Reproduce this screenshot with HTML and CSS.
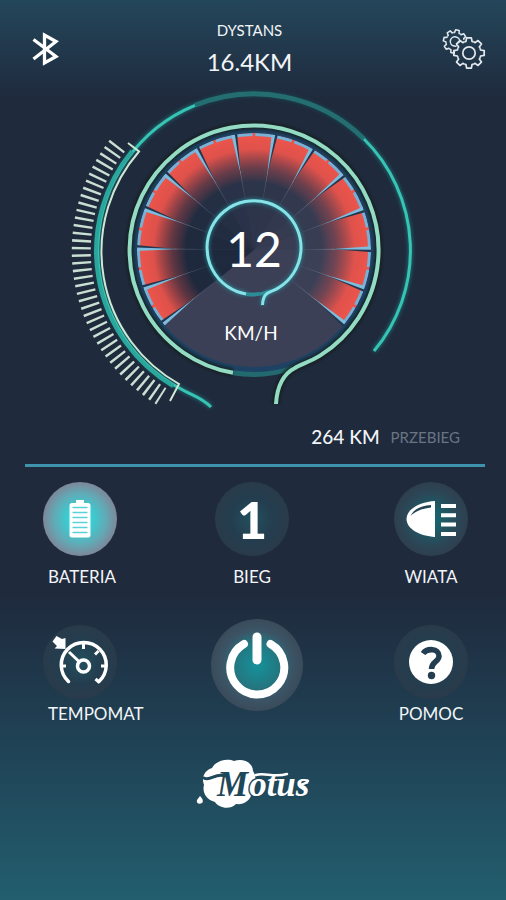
FILE: index.html
```html
<!DOCTYPE html>
<html lang="pl">
<head>
<meta charset="utf-8">
<meta name="viewport" content="width=device-width, initial-scale=1">
<title>Motus</title>
<link rel="stylesheet" href="styles.css">
</head>
<body>
<main class="app">
  <header class="top">
    <button class="icon-btn bluetooth" type="button" aria-label="Bluetooth">
      <svg width="26" height="34" viewBox="0 0 26 34" aria-hidden="true">
        <path d="M1.500 7.500 24 24.500 12.500 31V3L24 9.500 1.500 27" fill="none" stroke="#fff" stroke-width="3.300"/>
      </svg>
    </button>
    <div class="trip">
      <span class="trip-label">DYSTANS</span>
      <span class="trip-value">16.4KM</span>
    </div>
    <button class="icon-btn settings" type="button" aria-label="Ustawienia">
      <svg width="43" height="41" viewBox="0 0 43 41" aria-hidden="true">
        <defs>
          <path id="tooth" d="M-4.600-11.100A12 12 0 0 1-3-11.600L-2.400-15.200H2.400L3-11.600A12 12 0 0 1 4.600-11.100"/>
          <g id="gear">
            <use href="#tooth"/>
            <use href="#tooth" transform="rotate(45)"/>
            <use href="#tooth" transform="rotate(90)"/>
            <use href="#tooth" transform="rotate(135)"/>
            <use href="#tooth" transform="rotate(180)"/>
            <use href="#tooth" transform="rotate(225)"/>
            <use href="#tooth" transform="rotate(270)"/>
            <use href="#tooth" transform="rotate(315)"/>
            <circle r="6.200"/>
          </g>
          <mask id="behind">
            <rect width="43" height="41" fill="#fff"/>
            <circle cx="27" cy="24" r="14" fill="#000"/>
          </mask>
        </defs>
        <g fill="none" stroke="#e3e9ee" stroke-linejoin="round">
          <g mask="url(#behind)"><use href="#gear" stroke-width="2" transform="translate(13 12.500) rotate(12) scale(.76)"/></g>
          <use href="#gear" stroke-width="1.700" transform="translate(27 24)"/>
        </g>
      </svg>
    </button>
  </header>

  <svg class="gauge" viewBox="60 84 387 330" role="img" aria-label="12 KM/H">
    <defs>
      <radialGradient id="heat" gradientUnits="userSpaceOnUse" cx="254" cy="250" r="117">
        <stop offset=".58" stop-color="#e8514a" stop-opacity="0"/>
        <stop offset=".7" stop-color="#d84d4a" stop-opacity=".35"/>
        <stop offset=".86" stop-color="#e8534b" stop-opacity=".95"/>
        <stop offset="1" stop-color="#ee554b"/>
      </radialGradient>
      <linearGradient id="faint" gradientUnits="userSpaceOnUse" x1="-80" y1="0" x2="-48" y2="0">
        <stop offset="0" stop-color="#8fa4b8" stop-opacity=".6"/>
        <stop offset="1" stop-color="#8fa4b8" stop-opacity=".08"/>
      </linearGradient>
      <path id="slice" d="M0 0-117 0A117 117 0 0 1-110-39.700Z"/>
      <g id="spoke">
        <path d="M-118-3.500-78 0-118 1Z" fill="#22364e"/>
        <path d="M-117-1-76 0-117 2.500Z" fill="#7dbcdc"/>
        <path d="M-80-.300H-48V.300H-80Z" fill="url(#faint)"/>
      </g>
    </defs>

    <g class="outer">
      <path class="dim" d="M195 105.300A157 157 0 0 1 364 139"/>
      <path class="lit" d="M195 105.300A157 157 0 0 0 181 389C191 395 201 397 211 407"/>
      <path class="lit-wide" d="M132 151A157 157 0 0 0 173 386"/>
      <path class="lit" d="M364 139A157 157 0 0 1 374 351"/>
      <path class="bracket" d="M128 143 139 151.500A152 152 0 0 0 179 384L170 401"/>
      <path class="ticks" pathLength="284.500" d="M117.400 145.600A172 172 0 0 0 161.300 396.400"/>
    </g>

    <circle cx="254" cy="250" r="118" fill="#3b4057"/>
    <g transform="translate(254 250) rotate(-39)" fill="#1e293d">
      <use href="#slice"/>
      <use href="#slice" transform="rotate(19.850)"/>
      <use href="#slice" transform="rotate(39.700)" opacity=".95"/>
      <use href="#slice" transform="rotate(59.550)" opacity=".85"/>
      <use href="#slice" transform="rotate(79.400)" opacity=".75"/>
      <use href="#slice" transform="rotate(99.250)" opacity=".6"/>
      <use href="#slice" transform="rotate(119.100)" opacity=".5"/>
      <use href="#slice" transform="rotate(138.950)" opacity=".4"/>
      <use href="#slice" transform="rotate(158.800)" opacity=".3"/>
      <use href="#slice" transform="rotate(178.650)" opacity=".2"/>
      <use href="#slice" transform="rotate(198.500)" opacity=".1"/>
    </g>
    <path d="M254 250 163.100 323.600A117 117 0 1 1 344.900 323.600Z" fill="url(#heat)"/>
    <path class="rim" pathLength="258" d="M164.200 322.700A115.500 115.500 0 1 1 343.800 322.700"/>
    <g transform="translate(254 250) rotate(-39)">
      <use href="#spoke"/>
      <use href="#spoke" transform="rotate(19.850)"/>
      <use href="#spoke" transform="rotate(39.700)"/>
      <use href="#spoke" transform="rotate(59.550)"/>
      <use href="#spoke" transform="rotate(79.400)"/>
      <use href="#spoke" transform="rotate(99.250)"/>
      <use href="#spoke" transform="rotate(119.100)"/>
      <use href="#spoke" transform="rotate(138.950)"/>
      <use href="#spoke" transform="rotate(158.800)"/>
      <use href="#spoke" transform="rotate(178.650)"/>
      <use href="#spoke" transform="rotate(198.500)"/>
      <use href="#spoke" transform="rotate(218.350)"/>
      <use href="#spoke" transform="rotate(238.200)"/>
      <use href="#spoke" transform="rotate(258)"/>
    </g>

    <circle class="groove" cx="254" cy="250" r="120"/>
    <path class="ring-dim" d="M233 372.700A124.500 124.500 0 0 0 293 368"/>
    <path class="ring-shadow" d="M233 372.700A124.500 124.500 0 1 1 320 355.600C308 363 301 364 295 368 283 374 277 387 276 404"/>
    <path class="ring" d="M233 372.700A124.500 124.500 0 1 1 320 355.600C308 363 301 364 295 368 283 374 277 387 276 404"/>

    <path class="hub-dim" d="M246 294A47 47 0 0 0 271 291"/>
    <path class="hub" d="M246 294A47 47 0 1 1 279 287.500C272 293 263 290 262.500 305"/>

    <text class="speed" x="254" y="267">12</text>
    <text class="unit" x="251" y="340">KM/H</text>
  </svg>

  <p class="mileage"><strong>264 KM</strong><span>PRZEBIEG</span></p>

  <section class="panel">
    <button class="tile tile-left" type="button">
      <span class="disc disc-on">
        <svg width="22" height="40" viewBox="0 0 22 40" aria-hidden="true">
          <path d="M7 1H15V4H19A2.500 2.500 0 0 1 21.500 6.500V36A2.500 2.500 0 0 1 19 38.500H3A2.500 2.500 0 0 1 .5 36V6.500A2.500 2.500 0 0 1 3 4H7Z" fill="#fff"/>
          <path d="M3.500 8.500H18.500M3.500 13.500H18.500M3.500 18.500H18.500M3.500 23.500H18.500M3.500 28.500H18.500M3.500 33.500H18.500" stroke="#58d3d8" stroke-width="1.500"/>
        </svg>
      </span>
      <span class="name">BATERIA</span>
    </button>

    <button class="tile tile-mid" type="button">
      <span class="disc"><b class="gear-no">1</b></span>
      <span class="name">BIEG</span>
    </button>

    <button class="tile tile-right" type="button">
      <span class="disc disc-glow">
        <svg width="50" height="38" viewBox="0 0 50 38" aria-hidden="true">
          <path d="M29 1V37C14 36 .5 29 .5 19S14 2 29 1Z" fill="#fff"/>
          <path d="M4.500 16C8 8.500 16 5.500 25 5V7.500C17 8.500 10 10.500 4.500 16Z" fill="#204655"/>
          <path d="M35 6H50M35 15.300H50M35 24.600H50M35 34H50" stroke="#fff" stroke-width="4"/>
        </svg>
      </span>
      <span class="name">WIATA</span>
    </button>

    <button class="tile tile-left tile-low" type="button">
      <span class="disc">
        <svg width="56" height="50" viewBox="0 0 56 50" aria-hidden="true">
          <g fill="none" stroke="#fff" stroke-width="3">
            <path d="M16.500 44.500A22.500 22.500 0 1 1 47 44.500" stroke-width="3.500" stroke-linecap="round"/>
            <circle cx="31.500" cy="29" r="6" stroke-width="3.500"/>
            <path d="M17 15 27.500 25M31.500 7V12M9 29H14M49 29H54M46.500 14 43 17.500M43.500 42 47.500 45.500"/>
          </g>
          <path d="M4.500-1 10 2 13.500 1V12L2.500 11.500 5 9 .5 4.500Z" fill="#fff"/>
        </svg>
      </span>
      <span class="name">TEMPOMAT</span>
    </button>

    <button class="power" type="button" aria-label="Zasilanie">
      <svg width="64" height="66" viewBox="0 0 64 66" aria-hidden="true">
        <g fill="none" stroke="#fff" stroke-linecap="round">
          <path d="M19 12A27 27 0 1 0 45.500 12" stroke-width="8"/>
          <path d="M32 5V28" stroke-width="9"/>
        </g>
      </svg>
    </button>

    <button class="tile tile-right tile-low" type="button">
      <span class="disc">
        <svg width="44" height="44" viewBox="0 0 44 44" aria-hidden="true">
          <circle cx="22" cy="22" r="22" fill="#fff"/>
          <path d="M14 13.500C18 8 30 8 30 16 30 22 22.500 21.500 22.500 29" fill="none" stroke="#223e50" stroke-width="5.500"/>
          <circle cx="22.500" cy="35.500" r="3.700" fill="#223e50"/>
        </svg>
      </span>
      <span class="name">POMOC</span>
    </button>
  </section>

  <footer class="brand">
    <svg width="114" height="52" viewBox="0 0 114 52" role="img" aria-label="Motus">
      <path d="M16 10C20 2 32 0 38 3 48 0 57 5 57 13 62 20 58 28 56 34 55 43 47 47 40 46 33 53 22 49 19 44 10 42 6 34 8 27 5 19 9 12 16 10Z" fill="#fff"/>
      <path d="M4 38C6 40 8 43 6 45 3 47 0 45 1 42Z" fill="#fff"/>
      <path d="M8 20C14 24 20 14 29 18" fill="none" stroke="#1f475a" stroke-width="3" stroke-linecap="round"/>
      <text class="logo" x="21" y="38"><tspan class="logo-m">M</tspan><tspan class="logo-rest" dx="1">otus</tspan></text>
      <path d="M60 17C68 14 78 20 91 16M105 27C108 25 110 26 112 23" fill="none" stroke="#fff" stroke-width="2.500" stroke-linecap="round"/>
    </svg>
  </footer>
</main>
</body>
</html>
```
FILE: styles.css
```css
* {
  box-sizing: border-box;
}

body {
  margin: 0;
  font-family: Lato, "Liberation Sans", sans-serif;
  color: #f2f5f8;
}

button {
  margin: 0;
  padding: 0;
  border: 0;
  background: none;
  color: inherit;
  font: inherit;
  cursor: pointer;
}

svg {
  display: block;
  overflow: visible;
}

.app {
  min-height: 100vh;
  background: linear-gradient(#24465a 0, #1f2a3d 11%, #1f2a3d 66%, #204457 84%, #225e6e 100%);
}

.top {
  display: grid;
  grid-template-columns: 1fr auto 1fr;
  align-items: center;
  padding: 20px 21px 0 14px;
}

.bluetooth {
  justify-self: start;
  margin-left: 18px;
}

.settings {
  justify-self: end;
}

.trip {
  display: flex;
  flex-direction: column;
  align-items: center;
  gap: 6px;
}

.trip-label {
  font-size: 15px;
  line-height: 20px;
}

.trip-value {
  font-size: 24px;
  line-height: 32px;
}

.gauge {
  width: 100%;
  max-width: 387px;
  margin: 6px auto 0;
}

.outer path {
  fill: none;
}

.outer .dim {
  stroke: #246d70;
  stroke-width: 5;
  filter: drop-shadow(0 0 2px #174a50);
}

.outer .lit {
  stroke: #37c4b4;
  stroke-width: 3;
  filter: drop-shadow(0 0 2px #1d8c86);
}

.outer .lit-wide {
  stroke: #2aa79c;
  stroke-width: 4;
}

.outer .bracket {
  stroke: #cfe8d4;
  stroke-width: 2;
}

.outer .ticks {
  stroke: #c9dfd2;
  stroke-width: 19;
  stroke-dasharray: 2.400 4.844;
}

.rim {
  fill: none;
  stroke: #76b2d8;
  stroke-width: 3;
  stroke-dasharray: 8.600 1.323;
  stroke-dashoffset: -.6;
}

.groove {
  fill: none;
  stroke: #1d4263;
  stroke-width: 6;
}

.ring,
.ring-shadow,
.ring-dim {
  fill: none;
}

.ring-shadow {
  stroke: #16201f;
  stroke-width: 9;
  opacity: .7;
  filter: blur(1px);
}

.ring {
  stroke: #93dcc3;
  stroke-width: 4;
}

.ring-dim {
  stroke: #236a70;
  stroke-width: 5;
}

.hub,
.hub-dim {
  fill: none;
}

.hub {
  stroke: #86e4e8;
  stroke-width: 3;
  filter: drop-shadow(0 0 2px #2a9aa5);
}

.hub-dim {
  stroke: #2c8d96;
  stroke-width: 4;
}

.speed,
.unit {
  fill: #fff;
  text-anchor: middle;
}

.speed {
  font-size: 48px;
}

.unit {
  font-size: 19px;
}

.mileage {
  display: flex;
  justify-content: flex-end;
  align-items: center;
  gap: 11px;
  margin: 0 21px 0 25px;
  padding: 9px 25px 13px 0;
  border-bottom: 3px solid #3f93ad;
  line-height: 28px;
}

.mileage strong {
  font-size: 19px;
  font-weight: 500;
}

.mileage span {
  font-size: 15px;
  color: #6a7583;
}

.panel {
  display: grid;
  grid-template-columns: 1fr 92px 1fr;
  align-items: start;
  row-gap: 31px;
  padding: 15px 35px 0 43px;
}

.tile {
  display: flex;
  flex-direction: column;
  align-items: center;
  gap: 10px;
}

.tile-left {
  justify-self: start;
  align-items: flex-start;
}

.tile-left .name {
  padding-left: 5px;
}

.tile-mid {
  width: 82px;
}

.tile-right {
  justify-self: end;
  width: 80px;
}

.tile-low {
  gap: 4px;
  padding-top: 6px;
}

.disc {
  display: flex;
  justify-content: center;
  align-items: center;
  width: 74px;
  height: 74px;
  border-radius: 50%;
  background: radial-gradient(circle closest-side, #22505f, #243d4e 60%, #293b4b);
}

.disc-on {
  background: radial-gradient(circle closest-side, #35d0d6 30%, #62aab5 70%, #7d879a 100%);
}

.disc-glow {
  background: radial-gradient(circle closest-side, #17626c 20%, #2c4656 75%, #2e3f4f);
}

.gear-no {
  font-size: 52px;
  line-height: 60px;
  font-weight: 900;
  color: #fff;
}

.name {
  font-size: 17px;
  line-height: 22px;
}

.power {
  display: flex;
  justify-content: center;
  align-items: center;
  width: 92px;
  height: 92px;
  border-radius: 50%;
  background: radial-gradient(circle closest-side, #14929a, #247680 50%, #3b5566 75%, #3a4b5b);
}

.brand {
  display: flex;
  justify-content: center;
  padding: 33px 0 40px;
}

.logo {
  font-family: "Liberation Serif", serif;
  font-size: 35px;
  font-style: italic;
  font-weight: 700;
  fill: #fff;
}

.logo-m {
  fill: #1f475a;
}

.logo-rest {
  stroke: #1f475a;
  stroke-width: 3px;
  paint-order: stroke;
}
```
